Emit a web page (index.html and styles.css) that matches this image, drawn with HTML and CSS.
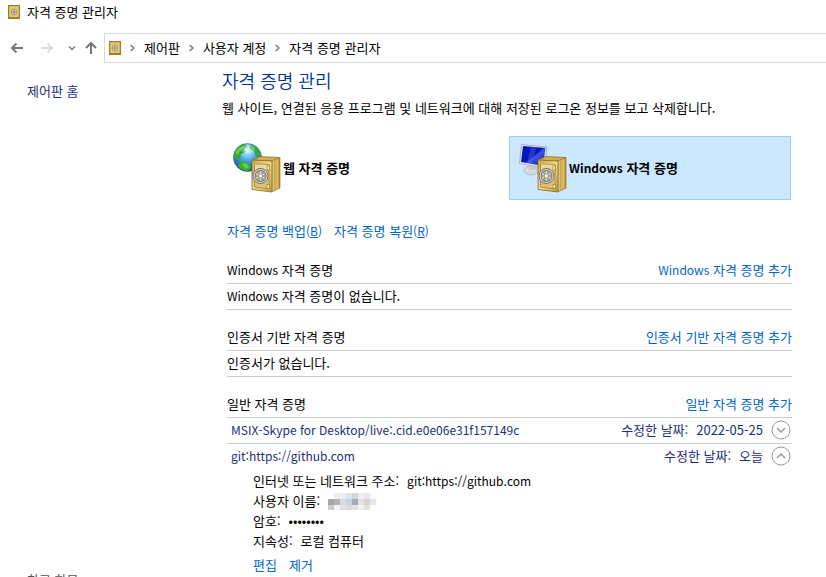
FILE: index.html
```html
<!DOCTYPE html>
<html lang="ko">
<head>
  <meta charset="UTF-8">
  <meta name="viewport" content="width=device-width, initial-scale=1.0">
  <title>자격 증명 관리자</title>
  <link rel="stylesheet" href="styles.css">
</head>
<body>
  <!-- shared icons -->
  <svg class="sprite" aria-hidden="true">
    <defs>
      <linearGradient id="goldFront" x1="0" y1="0" x2="1" y2="1">
        <stop offset="0" stop-color="#c9a84c"/>
        <stop offset=".5" stop-color="#ecd98f"/>
        <stop offset="1" stop-color="#c09a3e"/>
      </linearGradient>
      <linearGradient id="goldSide" x1="0" y1="0" x2="1" y2="0">
        <stop offset="0" stop-color="#f7eeb8"/>
        <stop offset=".3" stop-color="#cba851"/>
        <stop offset=".7" stop-color="#d9bd6a"/>
        <stop offset="1" stop-color="#a67b20"/>
      </linearGradient>
      <radialGradient id="sea" cx=".5" cy=".25" r=".75">
        <stop offset="0" stop-color="#d3f6ff"/>
        <stop offset=".4" stop-color="#55b5ea"/>
        <stop offset="1" stop-color="#123f9c"/>
      </radialGradient>
      <linearGradient id="screen" x1="0" y1="0" x2="1" y2="1">
        <stop offset="0" stop-color="#0718a8"/>
        <stop offset=".5" stop-color="#0a16c4"/>
        <stop offset=".55" stop-color="#3b55e0"/>
        <stop offset="1" stop-color="#0c1ab4"/>
      </linearGradient>
    </defs>
    <symbol id="vault" viewBox="0 0 12 14">
      <rect x=".5" y=".5" width="11" height="13" fill="#d0a548" stroke="#a07c30"/>
      <rect x="2" y="2" width="8" height="10" fill="#e3c36e" stroke="#edd58b" stroke-width=".6"/>
      <circle cx="6" cy="7" r="2.800" fill="#ece6d2" stroke="#9c8c60" stroke-width=".9"/>
      <circle cx="6" cy="7" r="1.200" fill="#aaa" stroke="#77705c" stroke-width=".7"/>
      <path d="M1 12.500h10" stroke="#a57a23"/>
    </symbol>
    <symbol id="safe" viewBox="0 0 48 50">
      <path d="M19 17 27 13.500 47 14.500 39 18z" fill="#cfae55" stroke="#8a6a22" stroke-width=".7"/>
      <path d="M39 18 47 14.500V45L39 49z" fill="url(#goldSide)" stroke="#9b7a2c" stroke-width=".7"/>
      <path d="M19 17 39 18V49L19 46.500z" fill="url(#goldFront)" stroke="#8a6a22" stroke-width=".8"/>
      <path d="M21.500 21 36 21.500V46L21.500 44z" fill="#dcc06c" stroke="#a9873a" stroke-width=".8"/>
      <path d="M22 21.500 35 22V25L22 37z" fill="#f3e6ac" opacity=".7"/>
      <path d="M34 23h2.500v4H34zM34 41.500h2.500v4H34z" fill="#fff0b3" stroke="#876821" stroke-width=".6"/>
      <circle cx="27.500" cy="33" r="6.500" fill="#b5aa88" stroke="#6f7070" stroke-width="2.800"/>
      <circle cx="27.500" cy="33" r="6.500" fill="none" stroke="#d2d6d8" stroke-width="1.200"/>
      <path d="M27.500 28v10M23 30.500l9 5M32 30.500l-9 5" stroke="#dcdcd8" stroke-width="1"/>
      <circle cx="27.500" cy="33" r="2.200" fill="#eeeff0" stroke="#85898c" stroke-width=".8"/>
    </symbol>
    <symbol id="chev" viewBox="0 0 5 8">
      <path d="M.700 1 4 4 .700 7" fill="none" stroke="#777" stroke-width="1.500"/>
    </symbol>
  </svg>

  <header class="titlebar">
    <svg class="vault-icon"><use href="#vault"/></svg>
    <span>자격 증명 관리자</span>
  </header>

  <div class="toolbar">
    <button class="nav-btn" aria-label="뒤로">
      <svg width="14" height="12" viewBox="0 0 14 12"><path d="M13 6H2M6.500 1.500 2 6l4.500 4.500" fill="none" stroke="#777" stroke-width="2"/></svg>
    </button>
    <button class="nav-btn" aria-label="앞으로" disabled>
      <svg width="14" height="12" viewBox="0 0 14 12"><path d="M1 6h11M7.500 1.500 12 6l-4.500 4.500" fill="none" stroke="#ddd" stroke-width="2"/></svg>
    </button>
    <button class="nav-btn nav-small" aria-label="최근 위치">
      <svg width="8" height="6" viewBox="0 0 8 6"><path d="M1 1.500 4 4.500l3-3" fill="none" stroke="#777" stroke-width="1.500"/></svg>
    </button>
    <button class="nav-btn nav-small" aria-label="위로">
      <svg width="12" height="14" viewBox="0 0 12 14"><path d="M6 13V2M1 7l5-5 5 5" fill="none" stroke="#777" stroke-width="2"/></svg>
    </button>
    <nav class="address">
      <svg class="vault-icon"><use href="#vault"/></svg>
      <svg class="chev"><use href="#chev"/></svg>
      <a href="#">제어판</a>
      <svg class="chev"><use href="#chev"/></svg>
      <a href="#">사용자 계정</a>
      <svg class="chev"><use href="#chev"/></svg>
      <a href="#">자격 증명 관리자</a>
    </nav>
  </div>

  <div class="page">
    <aside class="sidebar">
      <a href="#">제어판 홈</a>
      <span class="see-also">참고 항목</span>
    </aside>

    <main class="content">
      <h1>자격 증명 관리</h1>
      <p class="intro">웹 사이트, 연결된 응용 프로그램 및 네트워크에 대해 저장된 로그온 정보를 보고 삭제합니다.</p>

      <div class="vaults">
        <button class="vault-card">
          <svg width="48" height="50" viewBox="0 0 48 50">
            <circle cx="14.500" cy="14.500" r="14" fill="url(#sea)" stroke="#2861a3" stroke-width=".6"/>
            <path d="M2 8C4 4 8 1 12 1l2 2-3 3 1 3-4 2-1 4-3 2-3-2c-.5-3 0-5 1-7z" fill="#35a634"/>
            <path d="M18 1.500c4 1 8 4 9.500 9l-2 4-3-2-1-4-4-2-1-3z" fill="#36a83b"/>
            <path d="M7 18l5 1 5 3 1 3-3 3c-4 0-8-2-10-5z" fill="#37b22e"/>
            <path d="M2.500 9C5 5 8 3 11 3L8 7l-4 5z" fill="#8fd852" opacity=".7"/>
            <path d="M9 20l5 1 2 3-4 2z" fill="#8be451" opacity=".6"/>
            <ellipse cx="15" cy="6" rx="7" ry="4" fill="#fff" opacity=".3"/>
            <use href="#safe"/>
          </svg>
          <span>웹 자격 증명</span>
        </button>
        <button class="vault-card selected">
          <svg width="48" height="50" viewBox="0 0 48 50">
            <ellipse cx="12" cy="27.500" rx="7" ry="4.500" fill="#d7dadd" stroke="#a5acb3" stroke-width=".7"/>
            <path d="M10 20h8v7h-8z" fill="#c6ccd2"/>
            <path d="M2.500 1.500 28 4 25 25 .5 20.500z" fill="#e4e8ec" stroke="#9aa6b4" stroke-width=".8"/>
            <path d="M4 3 26.500 5 24 23 2 19z" fill="url(#screen)"/>
            <path d="M12 4 18 4.500 12 20.500 8 20z" fill="#5c7cf0" opacity=".3"/>
            <use href="#safe"/>
          </svg>
          <span><span class="latin">Windows</span> 자격 증명</span>
        </button>
      </div>

      <div class="lists">
        <div class="actions backup">
          <a href="#">자격 증명 백업<span class="latin">(<u>B</u>)</span></a>
          <a href="#">자격 증명 복원<span class="latin">(<u>R</u>)</span></a>
        </div>

        <section>
          <div class="row"><h2><span class="latin">Windows</span> 자격 증명</h2><a href="#"><span class="latin">Windows</span> 자격 증명 추가</a></div>
          <div class="row"><span><span class="latin">Windows</span> 자격 증명이 없습니다.</span></div>
        </section>

        <section>
          <div class="row"><h2>인증서 기반 자격 증명</h2><a href="#">인증서 기반 자격 증명 추가</a></div>
          <div class="row">인증서가 없습니다.</div>
        </section>

        <section>
          <div class="row"><h2>일반 자격 증명</h2><a href="#">일반 자격 증명 추가</a></div>
          <div class="row item">
            <span class="latin">MSIX-Skype for Desktop/live:.cid.e0e06e31f157149c</span>
            <span class="date"><span>수정한 날짜:</span><span>2022-05-25</span></span>
            <button class="expand" aria-label="펼치기">
              <svg width="20" height="20" viewBox="0 0 20 20" fill="none"><circle cx="10" cy="10" r="9" stroke="#999"/><path d="M6 8l4 4 4-4" stroke="#999" stroke-width="1.500"/></svg>
            </button>
          </div>
          <div class="row item open">
            <span class="latin">git:https://github.com</span>
            <span class="date"><span>수정한 날짜:</span><span>오늘</span></span>
            <button class="expand" aria-label="접기">
              <svg width="20" height="20" viewBox="0 0 20 20" fill="none"><circle cx="10" cy="10" r="9" stroke="#999"/><path d="M6 12l4-4 4 4" stroke="#999" stroke-width="1.500"/></svg>
            </button>
          </div>
          <dl class="details">
            <div><dt>인터넷 또는 네트워크 주소:</dt><dd class="latin">git:https://github.com</dd></div>
            <div><dt>사용자 이름:</dt><dd>
              <!-- masked user name -->
              <svg class="mask" width="48" height="18" viewBox="0 0 48 18" shape-rendering="crispEdges">
                <path d="M6 0h36v6H6z" fill="#eeeef0"/><path d="M18 0h6v6h-6z" fill="#dfe3e9"/><path d="M24 0h6v6h-6z" fill="#d3d6da"/><path d="M36 0h6v6h-6z" fill="#e9e9e7"/><path d="M42 0h6v6h-6z" fill="#f6faff"/>
                <path d="M0 6h6v6H0z" fill="#b0a4a0"/><path d="M6 6h6v6H6z" fill="#b3b2b8"/><path d="M12 6h6v6h-6z" fill="#d9dcdf"/><path d="M18 6h6v6h-6z" fill="#ccd3dd"/><path d="M24 6h6v6h-6z" fill="#a9a9b8"/><path d="M30 6h6v6h-6z" fill="#dfe3e5"/><path d="M36 6h6v6h-6z" fill="#d8d3cb"/><path d="M42 6h6v6h-6z" fill="#e3e7f5"/>
                <path d="M0 12h6v5H0z" fill="#ccc"/><path d="M6 12h6v5H6z" fill="#f5f5f5"/><path d="M12 12h6v5h-6z" fill="#e2e2e5"/><path d="M18 12h6v5h-6z" fill="#dadade"/><path d="M24 12h6v5h-6z" fill="#e3e3e3"/><path d="M30 12h6v5h-6z" fill="#f1f1f1"/><path d="M36 12h6v5h-6z" fill="#e1e1e1"/>
              </svg>
            </dd></div>
            <div><dt>암호:</dt><dd>••••••••</dd></div>
            <div><dt>지속성:</dt><dd>로컬 컴퓨터</dd></div>
          </dl>
          <div class="actions edit">
            <a href="#">편집</a>
            <a href="#">제거</a>
          </div>
        </section>
      </div>
    </main>
  </div>
</body>
</html>
```
FILE: styles.css
```css
html, body {
  height: 100%;
  margin: 0;
}
body {
  overflow: hidden;
  background: #fff;
  color: #000;
  font-family: "Noto Sans CJK KR", sans-serif;
  font-size: 13px;
  line-height: 20px;
}
h1, h2, p, dl, dd { margin: 0; }
a { color: #0066cc; text-decoration: none; }
a:hover { text-decoration: underline; }
button {
  padding: 0;
  border: none;
  background: none;
  font: inherit;
  color: inherit;
}
svg { display: block; flex: none; }
.sprite { position: absolute; width: 0; height: 0; }
.vault-icon { width: 12px; height: 14px; }
.latin { font-size: 12px; }

.titlebar {
  display: flex;
  align-items: center;
  gap: 7px;
  height: 24px;
  padding-left: 8px;
}

.toolbar {
  display: flex;
  align-items: center;
  margin-top: 9px;
}
.nav-btn {
  display: flex;
  justify-content: center;
  width: 30px;
}
.nav-btn:first-child { margin-left: 2px; }
.nav-small { width: 19px; }
.address {
  display: flex;
  flex: 1;
  align-items: center;
  gap: 9px;
  height: 28px;
  margin-left: 4px;
  padding-left: 4px;
  border: 1px solid #d9d9d9;
  border-right: none;
}
.address a { color: #000; }
.chev { width: 5px; height: 8px; }

.page { display: flex; }
.sidebar {
  display: flex;
  flex-direction: column;
  justify-content: space-between;
  width: 195px;
  padding: 18px 0 0 27px;
}
.sidebar a { color: #1c2f7c; }
.see-also { color: #555; }

.content {
  flex: 1;
  padding: 6px 34px 0 0;
}
h1 {
  color: #003399;
  font-size: 18px;
  font-weight: 350;
  line-height: 22px;
}
.intro { margin-top: 7px; }

.vaults {
  display: grid;
  grid-template-columns: 1fr 1fr;
  gap: 4px;
  margin: 18px 1px 0;
}
.vault-card {
  display: flex;
  align-items: center;
  gap: 2px;
  height: 64px;
  padding-left: 9px;
  border: 1px solid transparent;
  font-weight: 700;
}
.vault-card.selected {
  background: #cce8ff;
  border-color: #99d1ff;
}

.lists { padding-left: 5px; }
.actions { display: flex; gap: 12px; }
.backup { margin: 21px 0 17px; }
section { margin-bottom: 15px; }
.row {
  display: flex;
  align-items: center;
  height: 23px;
  padding-bottom: 2px;
  border-bottom: 1px solid #ccc;
}
.row h2 {
  flex: 1;
  font-size: 13px;
  font-weight: 400;
}
.item {
  padding: 0 1px 2px 4px;
  color: #1c2f7c;
}
.item.open { border-bottom-color: transparent; }
.date {
  display: flex;
  gap: 8px;
  margin-left: auto;
}
.expand { margin-left: 8px; }

.details { padding: 1px 0 0 26px; }
.details div { display: flex; gap: 8px; }
.mask { margin-top: 2px; }
.edit { margin-top: 4px; padding-left: 26px; }
```
